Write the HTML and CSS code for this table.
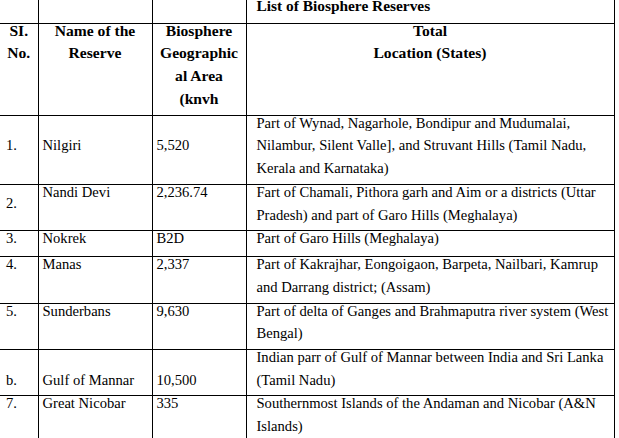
FILE: index.html
```html
<!DOCTYPE html>
<html>
<head>
<meta charset="utf-8">
<link rel="stylesheet" href="styles.css">
</head>
<body>
<table class="reserves">
  <colgroup>
    <col class="c-no">
    <col class="c-name">
    <col class="c-area">
    <col class="c-loc">
  </colgroup>
  <tr class="title-row">
    <td class="first"></td>
    <td></td>
    <td></td>
    <td class="title">List of Biosphere Reserves</td>
  </tr>
  <tr class="head-row">
    <th class="first"><div class="t">SI.<br>No.</div></th>
    <th><div class="t">Name of the<br>Reserve</div></th>
    <th><div class="t">Biosphere<br>Geographic<br>al Area<br>(knvh</div></th>
    <th><div class="t">Total<br>Location (States)</div></th>
  </tr>
  <tr class="r3">
    <td class="first mid"><div class="t">1.</div></td>
    <td class="mid"><div class="t">Nilgiri</div></td>
    <td class="mid"><div class="t">5,520</div></td>
    <td class="loc"><div class="t">Part of Wynad, Nagarhole, Bondipur and Mudumalai,<br>Nilambur, Silent Valle], and Struvant Hills (Tamil Nadu,<br>Kerala and Karnataka)</div></td>
  </tr>
  <tr class="r2">
    <td class="first mid"><div class="t">2.</div></td>
    <td><div class="t">Nandi Devi</div></td>
    <td><div class="t">2,236.74</div></td>
    <td class="loc"><div class="t">Fart of Chamali, Pithora garh and Aim or a districts (Uttar<br>Pradesh) and part of Garo Hills (Meghalaya)</div></td>
  </tr>
  <tr class="r1">
    <td class="first"><div class="t">3.</div></td>
    <td><div class="t">Nokrek</div></td>
    <td><div class="t">B2D</div></td>
    <td class="loc"><div class="t">Part of Garo Hills (Meghalaya)</div></td>
  </tr>
  <tr class="r2">
    <td class="first"><div class="t">4.</div></td>
    <td><div class="t">Manas</div></td>
    <td><div class="t">2,337</div></td>
    <td class="loc"><div class="t">Part of Kakrajhar, Eongoigaon, Barpeta, Nailbari, Kamrup<br>and Darrang district; (Assam)</div></td>
  </tr>
  <tr class="r2">
    <td class="first"><div class="t">5.</div></td>
    <td><div class="t">Sunderbans</div></td>
    <td><div class="t">9,630</div></td>
    <td class="loc"><div class="t">Part of delta of Ganges and Brahmaputra river system (West<br>Bengal)</div></td>
  </tr>
  <tr class="r2">
    <td class="first bot"><div class="t">b.</div></td>
    <td class="bot"><div class="t">Gulf of Mannar</div></td>
    <td class="bot"><div class="t">10,500</div></td>
    <td class="loc"><div class="t">Indian parr of Gulf of Mannar between India and Sri Lanka<br>(Tamil Nadu)</div></td>
  </tr>
  <tr class="r2">
    <td class="first"><div class="t">7.</div></td>
    <td><div class="t">Great Nicobar</div></td>
    <td><div class="t">335</div></td>
    <td class="loc"><div class="t">Southernmost Islands of the Andaman and Nicobar (A&amp;N<br>Islands)</div></td>
  </tr>
  <tr class="tail">
    <td class="first"></td>
    <td></td>
    <td></td>
    <td class="loc"></td>
  </tr>
</table>
</body>
</html>
```
FILE: styles.css
```css
html, body {
  margin: 0;
  padding: 0;
  background: #ffffff;
  overflow: hidden;
}

.reserves {
  border-collapse: collapse;
  table-layout: fixed;
  width: 614px;
  margin-top: -6px;
  font-family: "Liberation Serif", "DejaVu Serif", serif;
  font-size: 14.6px;
  line-height: 22.7px;
  color: #000;
}

.c-no { width: 38px; }
.c-name { width: 114px; }
.c-area { width: 94px; }
.c-loc { width: 368px; }

.reserves td,
.reserves th {
  border: 1px solid #000;
  padding: 0 4px;
  vertical-align: top;
  white-space: nowrap;
  text-align: left;
  overflow: hidden;
  box-sizing: border-box;
}

.reserves .first {
  border-left: none;
  padding-left: 6px;
}

.reserves .loc {
  padding-left: 10px;
}

.t {
  position: relative;
  top: -4px;
}

.title-row td {
  height: 27px;
}

.reserves .title {
  font-weight: bold;
  font-size: 15.4px;
  padding-left: 10px;
  padding-bottom: 5px;
  vertical-align: bottom;
}

.head-row th {
  height: 92px;
  font-weight: bold;
  font-size: 15.6px;
  text-align: center;
  vertical-align: top;
  padding: 0;
}

.reserves .head-row th.first {
  padding-left: 0;
  text-align: center;
}

.reserves .mid { vertical-align: middle; }
.reserves .bot { vertical-align: bottom; }

.r3 td { height: 68px; }
.r2 td { height: 46px; }
.r1 td { height: 26px; }
.tail td { height: 30px; }
```
